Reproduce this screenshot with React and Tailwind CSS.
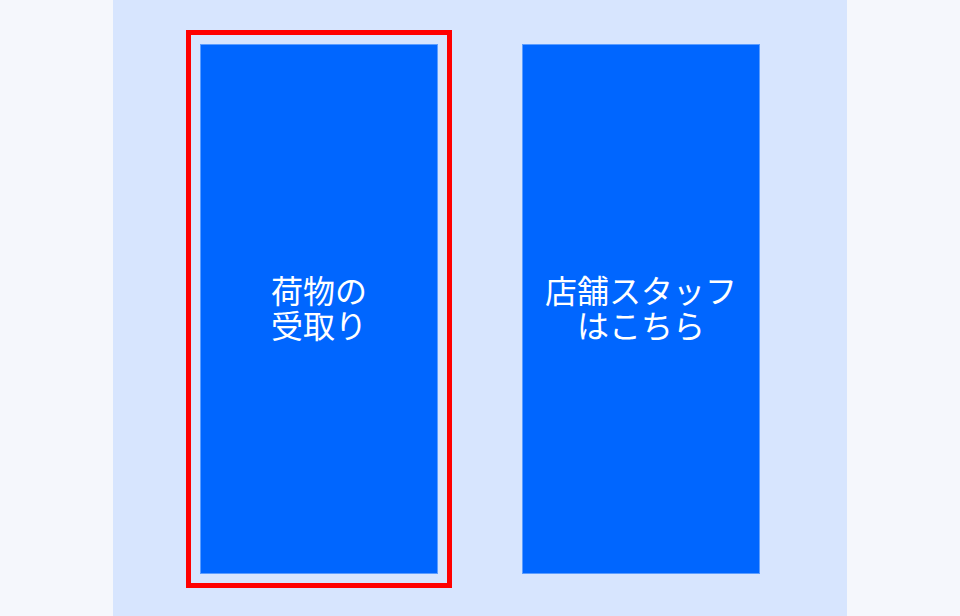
// Two-option entry screen: parcel pickup (selected) and staff login

const options = [
  { id: "pickup", lines: ["荷物の", "受取り"], selected: true },
  { id: "staff", lines: ["店舗スタッフ", "はこちら"], selected: false },
];

function OptionTile({ lines, selected }) {
  return (
    <div
      className={`border-[5px] p-[9px] ${selected ? "border-[#ff0000]" : "border-transparent"}`}
    >
      <button className="flex h-[530px] w-[238px] flex-col items-center justify-center border border-[#5c9dff] bg-[#0066ff] pb-[4px] text-white">
        {lines.map((line) => (
          <span key={line} className="block text-[32px] leading-[35px]">
            {line}
          </span>
        ))}
      </button>
    </div>
  );
}

export default function App() {
  return (
    <div
      className="flex h-[616px] w-full justify-center bg-[#f5f7fc]"
      style={{ fontFamily: '"Noto Sans CJK JP", "Noto Sans", sans-serif' }}
    >
      <div className="flex w-[734px] items-start justify-center gap-[56px] bg-[#d7e5fe] pt-[30px]">
        {options.map((o) => (
          <OptionTile key={o.id} lines={o.lines} selected={o.selected} />
        ))}
      </div>
    </div>
  );
}
